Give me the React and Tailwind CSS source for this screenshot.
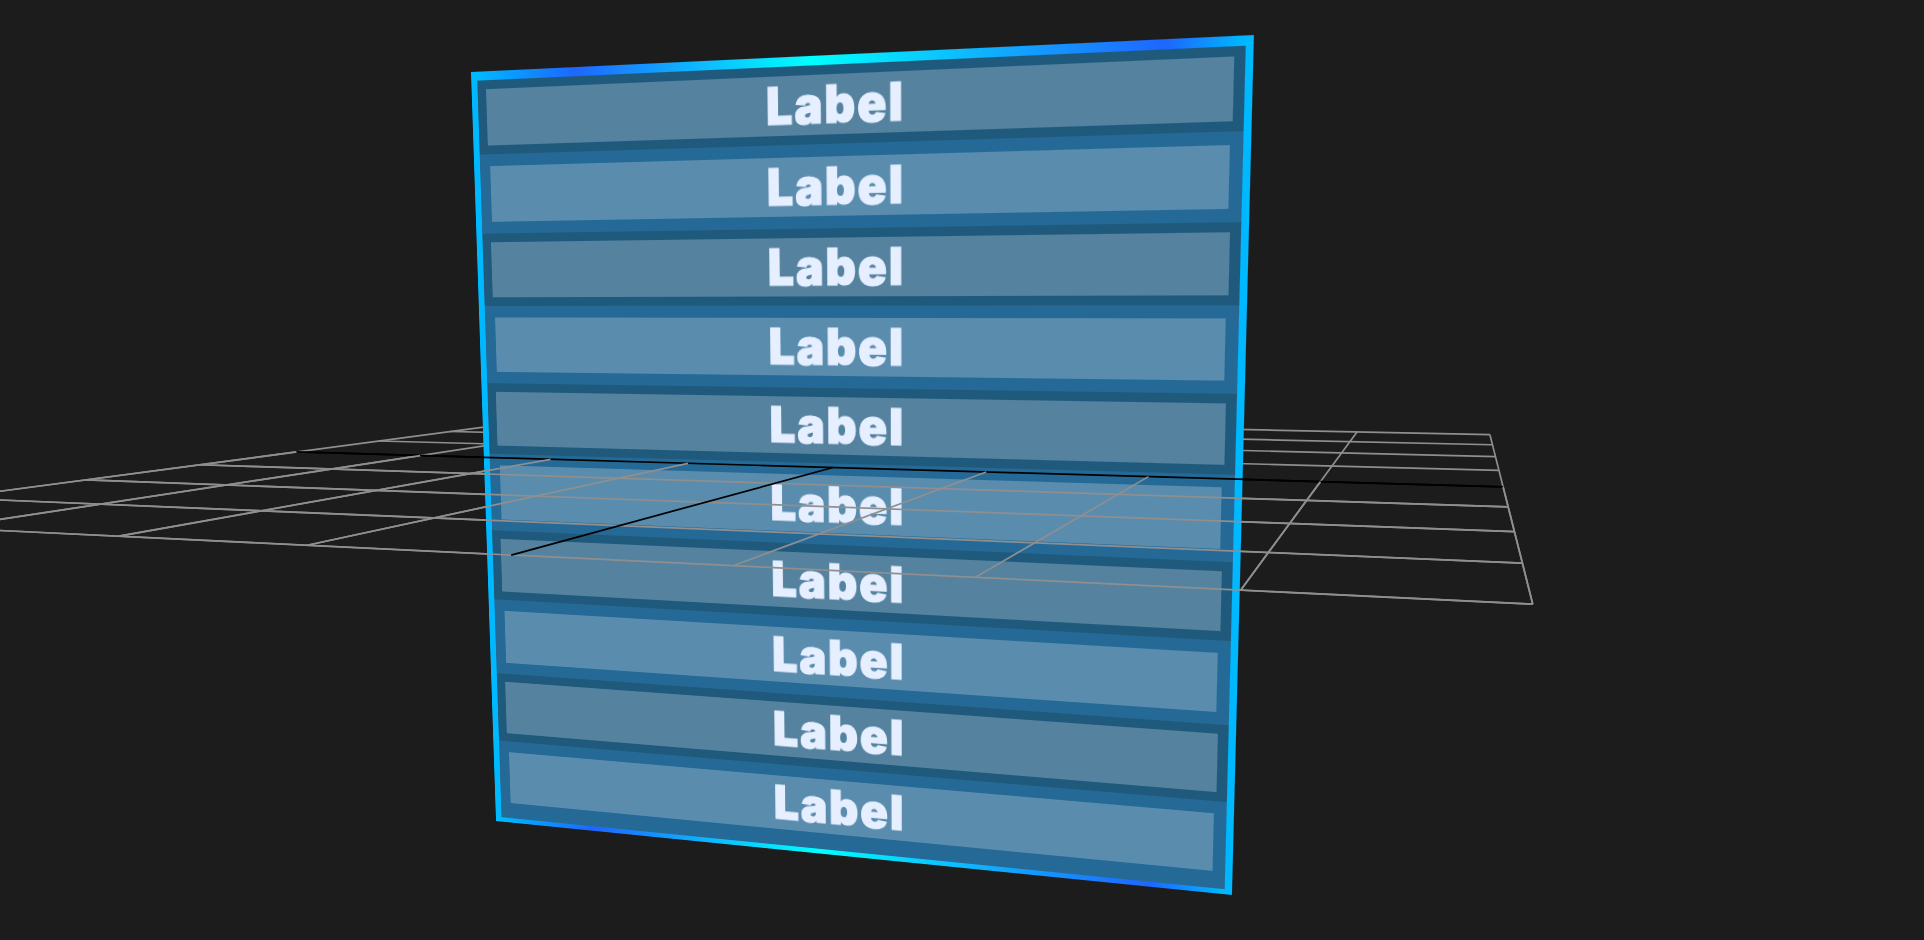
// local panel is laid out flat, then projected onto the photographed quad
const PANEL_W = 800;
const PANEL_H = 800;
const PANEL_QUAD = [
  [471, 72],
  [1254, 35],
  [1232, 895],
  [496, 821],
];

function homography(q) {
  const [[x0, y0], [x1, y1], [x2, y2], [x3, y3]] = q;
  const dx1 = x1 - x2;
  const dx2 = x3 - x2;
  const sx = x0 - x1 + x2 - x3;
  const dy1 = y1 - y2;
  const dy2 = y3 - y2;
  const sy = y0 - y1 + y2 - y3;
  const det = dx1 * dy2 - dx2 * dy1;
  const g = (sx * dy2 - dx2 * sy) / det;
  const h = (dx1 * sy - sx * dy1) / det;
  return {
    a: x1 - x0 + g * x1,
    b: x3 - x0 + h * x3,
    c: x0,
    d: y1 - y0 + g * y1,
    e: y3 - y0 + h * y3,
    f: y0,
    g,
    h,
  };
}

function panelTransform() {
  const { a, b, c, d, e, f, g, h } = homography(PANEL_QUAD);
  const m = [
    a / PANEL_W, d / PANEL_W, 0, g / PANEL_W,
    b / PANEL_H, e / PANEL_H, 0, h / PANEL_H,
    0, 0, 1, 0,
    c, f, 0, 1,
  ];
  return `matrix3d(${m.join(",")})`;
}

// u, v run from -4 to 4; v = 0 is where the panel cuts the floor
function project(u, v) {
  const w = 1 - 0.02763 * u - 0.0852 * v;
  return [(126 * u - 124 * v + 833) / w, (-8.6 * u - 25.4 * v + 467.5) / w];
}

function GridLine({ from, to, center }) {
  const [x1, y1] = project(from[0], from[1]);
  const [x2, y2] = project(to[0], to[1]);
  return (
    <line
      x1={x1}
      y1={y1}
      x2={x2}
      y2={y2}
      stroke={center ? "#000000" : "#8f8f8f"}
      strokeWidth={1.7}
    />
  );
}

function Grid({ vFrom }) {
  const steps = [-4, -3, -2, -1, 0, 1, 2, 3, 4];
  return (
    <svg className="absolute inset-0 h-full w-full blur-[0.4px]" viewBox="0 0 1924 940">
      {steps
        .filter((v) => v >= vFrom)
        .map((v) => (
          <GridLine key={`v${v}`} from={[-4, v]} to={[4, v]} center={v === 0} />
        ))}
      {steps.map((u) => (
        <GridLine key={`u${u}`} from={[u, vFrom]} to={[u, 4]} center={u === 0} />
      ))}
    </svg>
  );
}

function Row({ odd }) {
  return (
    <div
      className={
        odd
          ? "flex h-[75.1px] shrink-0 bg-[#1f5a7d] px-[10px] py-[9px]"
          : "flex h-[81.1px] shrink-0 bg-[#256996] px-[12px] py-[12px]"
      }
    >
      <div
        className={
          odd
            ? "flex flex-1 items-center justify-center bg-[#54829f]"
            : "flex flex-1 items-center justify-center bg-[#5a8cae]"
        }
      >
        <span className="font-['Inter',sans-serif] text-[49px] leading-none font-black tracking-[2px] text-[#e6efff] [-webkit-text-stroke:1.2px_#e6efff]">
          Label
        </span>
      </div>
    </div>
  );
}

export default function App() {
  const rows = [0, 1, 2, 3, 4, 5, 6, 7, 8, 9];
  return (
    <div className="relative h-[940px] w-full overflow-hidden bg-[#1c1c1c]">
      <Grid vFrom={-4} />
      <div
        className="absolute top-0 left-0 flex h-[800px] w-[800px] origin-top-left flex-col bg-[linear-gradient(to_right,#00b8ff_0%,#00b8ff_1%,#1e66ff_15%,#00ffff_47%,#1e66ff_90%,#00b8ff_99%,#00b8ff_100%)] px-[7px] pt-[9px] pb-[5px] blur-[0.5px]"
        style={{ transform: panelTransform() }}
      >
        {rows.map((i) => (
          <Row key={i} odd={i % 2 === 0} />
        ))}
        <div className="flex-1 bg-[#256996]" />
      </div>
      <Grid vFrom={0} />
    </div>
  );
}
